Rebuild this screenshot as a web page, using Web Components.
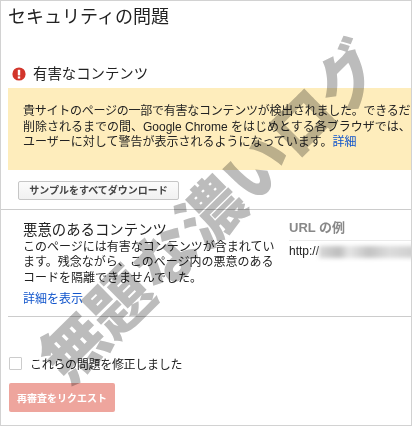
<!DOCTYPE html>
<html lang="ja"><head><meta charset="utf-8">
<style>
html,body{margin:0;padding:0;background:#fff}
body{width:412px;height:426px;overflow:hidden;font-family:"Liberation Sans","Noto Sans CJK JP",sans-serif;color:#222}
notice-box a{color:#1155cc}
</style></head><body>
<security-panel>
  <span slot="title">セキュリティの問題</span>
  <issue-head slot="head">有害なコンテンツ</issue-head>
  <notice-box slot="notice">
    <div style="letter-spacing:-.25px">貴サイトのページの一部で有害なコンテンツが検出されました。できるだ</div>
    <div>削除されるまでの間、Google Chrome をはじめとする各ブラウザでは、</div>
    <div>ユーザーに対して警告が表示されるようになっています。<a>詳細</a></div>
  </notice-box>
  <flat-button slot="download">サンプルをすべてダウンロード</flat-button>
  <issue-detail slot="detail"></issue-detail>
  <fix-form slot="form"></fix-form>
</security-panel>
<script>
function def(name,html){customElements.define(name,class extends HTMLElement{
  constructor(){super();this.attachShadow({mode:'open'}).innerHTML=html;}
});}
def('security-panel',`<style>
:host{display:block;position:relative;width:412px;height:426px;box-sizing:border-box;border:1px solid #d2d2d2;overflow:hidden;background:#fff}
.title{height:61px;padding:2px 0 0 7px;font-size:18px;line-height:28px;color:#222;box-sizing:border-box}
.dl{padding:10px 0 8px 17px;height:40px;box-sizing:border-box;border-bottom:1px solid #ccc}
.wm{position:absolute;left:-43px;top:173px;width:500px;text-align:center;font:900 64px/70px "Noto Sans CJK JP",sans-serif;color:#bcbcbc;transform:rotate(-44.6deg);white-space:nowrap;mix-blend-mode:multiply}
</style>
<div class="title"><slot name="title"></slot></div>
<slot name="head"></slot>
<slot name="notice"></slot>
<div class="dl"><slot name="download"></slot></div>
<slot name="detail"></slot>
<slot name="form"></slot>
<div class="wm" aria-hidden="true">無題な濃いログ</div>`);
def('issue-head',`<style>
:host{display:flex;align-items:flex-start;gap:7px;height:26px;padding-left:11px;font-size:14.4px;line-height:24px;color:#222}
svg{width:14px;height:14px;flex:none;margin-top:5px}
</style><svg viewBox="0 0 14 14"><circle cx="7" cy="7" r="6.6" fill="#d2352b"/><rect x="5.8" y="2.8" width="2.4" height="5.6" fill="#fff"/><rect x="5.8" y="9.4" width="2.4" height="2.2" fill="#fff"/></svg><span><slot></slot></span>`);
def('notice-box',`<style>
:host{display:block;margin-left:7px;height:82px;box-sizing:border-box;padding:16px 0 0 15px;background:#feedbc;font-size:12px;line-height:15.5px;white-space:nowrap;overflow:hidden;color:#222}
::slotted(div){display:block}
</style><slot></slot>`);
def('flat-button',`<style>
:host{display:inline-block;box-sizing:border-box;height:19px;width:161px;border:1px solid #c6c6c6;border-radius:2px;background:linear-gradient(#fbfbfb,#f1f1f1);font-size:10px;font-weight:700;line-height:17px;text-align:center;color:#444;white-space:nowrap}
</style><slot></slot>`);
def('issue-detail',`<style>
:host{display:grid;grid-template-columns:266px 1fr;height:107px;box-sizing:border-box;margin-left:7px;padding:10px 0 0 15px;border-bottom:1px solid #ccc;font-size:12px;line-height:15.4px;color:#222}
h3{margin:0;font-weight:400;font-size:14.4px;line-height:20px}
p{margin:0}
a{display:block;margin-top:5px;color:#1155cc;line-height:16px}
.url{overflow:hidden;white-space:nowrap;margin-top:-4px}
.url h4{margin:0 0 3px;height:25px;box-sizing:border-box;font-size:13px;line-height:23px;color:#888;font-weight:700;border-bottom:1px solid #ebebeb}
.blur{display:inline-block;width:100px;height:12px;background:linear-gradient(90deg,#d8d8d8,#bdbdbd 20%,#e6e6e6 30%,#c2c2c2 50%,#dcdcdc 70%,#cccccc);filter:blur(2px);vertical-align:middle}
</style><div style="width:254px"><h3>悪意のあるコンテンツ</h3><p>このページには有害なコンテンツが含まれています。残念ながら、このページ内の悪意のあるコードを隔離できませんでした。</p><a>詳細を表示</a></div>
<div class="url"><h4>URL の例</h4>http://<span class="blur"></span></div>`);
def('fix-form',`<style>
:host{display:block;padding:38px 0 0 8px;font-size:12px;color:#222}
.row{display:flex;align-items:center;gap:8px;height:16px;letter-spacing:-.3px}
.box{width:11px;height:11px;border:1px solid #ccc;border-radius:1px;background:#fff;flex:none}
button{display:block;margin:12px 0 0 0;padding:0;width:106px;height:29px;border:0;border-radius:2px;background:#eea59d;color:#fff;font:700 10px "Liberation Sans","Noto Sans CJK JP",sans-serif}
</style><div class="row"><span class="box"></span><span>これらの問題を修正しました</span></div><button>再審査をリクエスト</button>`);
</script>
</body></html>
